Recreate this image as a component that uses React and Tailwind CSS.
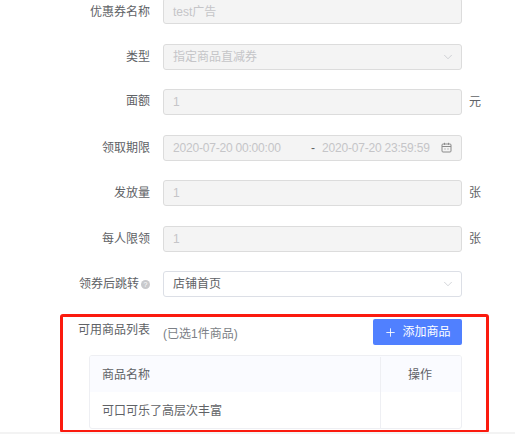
import { ChevronDown, Plus } from 'lucide-react'

const FONT = 'font-["Liberation_Sans","Noto_Sans_CJK_SC",sans-serif]'

function Label({ className = '', children }) {
  return <div className={`w-[150px] shrink-0 text-right text-xs text-[#606266] ${className}`}>{children}</div>
}

function Field({ disabled = true, className = '', children }) {
  return (
    <div
      className={`flex h-[26px] w-[299px] shrink-0 items-center rounded-[3px] border pl-[9px] pr-[9px] text-xs ${
        disabled ? 'border-[#dcdcdc] bg-[#f4f4f4] text-[#c5c5c8]' : 'border-[#dcdfe6] bg-white text-[#606266]'
      } ${className}`}
    >
      {children}
    </div>
  )
}

function Row({ label, labelClass, unit, children }) {
  return (
    <div className="flex h-[26px] items-center">
      <Label className={labelClass}>{label}</Label>
      <div className="ml-[13px] flex items-center">
        {children}
        {unit && <span className="ml-[7px] text-xs text-[#606266]">{unit}</span>}
      </div>
    </div>
  )
}

function Chevron() {
  return <ChevronDown size={14} strokeWidth={1} className="ml-auto mr-[-3px] text-[#b4b7bd]" />
}

function CalendarIcon() {
  return (
    <svg width="11" height="11" viewBox="0 0 11 11" fill="none" stroke="#8a8a8a" strokeWidth="1" className="ml-auto shrink-0">
      <rect x="1" y="2" width="9" height="8" rx="1" />
      <path d="M1 4.5h9M3.5 .8v2M7.5 .8v2M3.5 7h1M6.5 7h1" />
    </svg>
  )
}

export default function App() {
  return (
    <div className={`flex h-[434px] w-[515px] flex-col overflow-hidden bg-white ${FONT}`}>
      <div className="relative flex-1 overflow-hidden">
        <div className="mt-[-2px] flex flex-col gap-[19.5px]">
          <Row label="优惠券名称" labelClass="pt-[1px]">
            <Field className="pt-[2px]">test广告</Field>
          </Row>
          <Row label="类型">
            <Field>
              指定商品直减券
              <Chevron />
            </Field>
          </Row>
          <Row label="面额" labelClass="pb-[2px]" unit="元">
            <Field>1</Field>
          </Row>
          <Row label="领取期限">
            <Field>
              <span className="w-[138px] tracking-[-0.2px]">2020-07-20 00:00:00</span>
              <span className="text-[#606266]">-</span>
              <span className="ml-[7px] tracking-[-0.2px]">2020-07-20 23:59:59</span>
              <CalendarIcon />
            </Field>
          </Row>
          <Row label="发放量" unit="张">
            <Field>1</Field>
          </Row>
          <Row label="每人限领" unit="张">
            <Field>1</Field>
          </Row>
          <Row
            label={
              <span className="inline-flex items-center justify-end gap-[2px]">
                领券后跳转
                <span className="flex h-[9px] w-[9px] items-center justify-center rounded-full bg-[#c8c9cc] text-[7px] leading-none text-white">
                  ?
                </span>
              </span>
            }
          >
            <Field disabled={false}>
              店铺首页
              <Chevron />
            </Field>
          </Row>
        </div>

        <div className="mt-[22px] flex w-[462px] items-start">
          <div className="mt-[3px] w-[150px] shrink-0 text-right text-xs text-[#606266]">可用商品列表</div>
          <div className="ml-[13px] mt-[7px] text-xs text-[#7b7f86]">(已选1件商品)</div>
          <button className="ml-auto flex h-[26px] w-[89px] items-center justify-center gap-[5px] rounded-[2px] bg-[#5080ff] text-xs text-white">
            <Plus size={13} strokeWidth={1.6} />
            添加商品
          </button>
        </div>

        <div className="ml-[89px] mt-[10px] w-[373px] overflow-hidden rounded-[3px] border border-[#eeeff3] text-xs text-[#606266]">
          <div className="flex h-[36px] bg-[#fafbff] pt-[1px]">
            <div className="flex flex-1 items-center pl-[12px]">商品名称</div>
            <div className="flex w-[81px] items-center justify-center border-l border-[#eeeff3] pr-[2px]">操作</div>
          </div>
          <div className="flex h-[36px]">
            <div className="flex flex-1 items-center pl-[12px] pt-[1px]">可口可乐了高层次丰富</div>
            <div className="w-[81px] border-l border-[#eeeff3]" />
          </div>
        </div>

        {/* 标注红框 */}
        <div className="absolute left-[60px] top-[314px] h-[119px] w-[429px] rounded-[3px] border-[3px] border-[#fb1a0e]" />
      </div>
      <div className="h-[2px] bg-[#f3f3f3]" />
    </div>
  )
}
